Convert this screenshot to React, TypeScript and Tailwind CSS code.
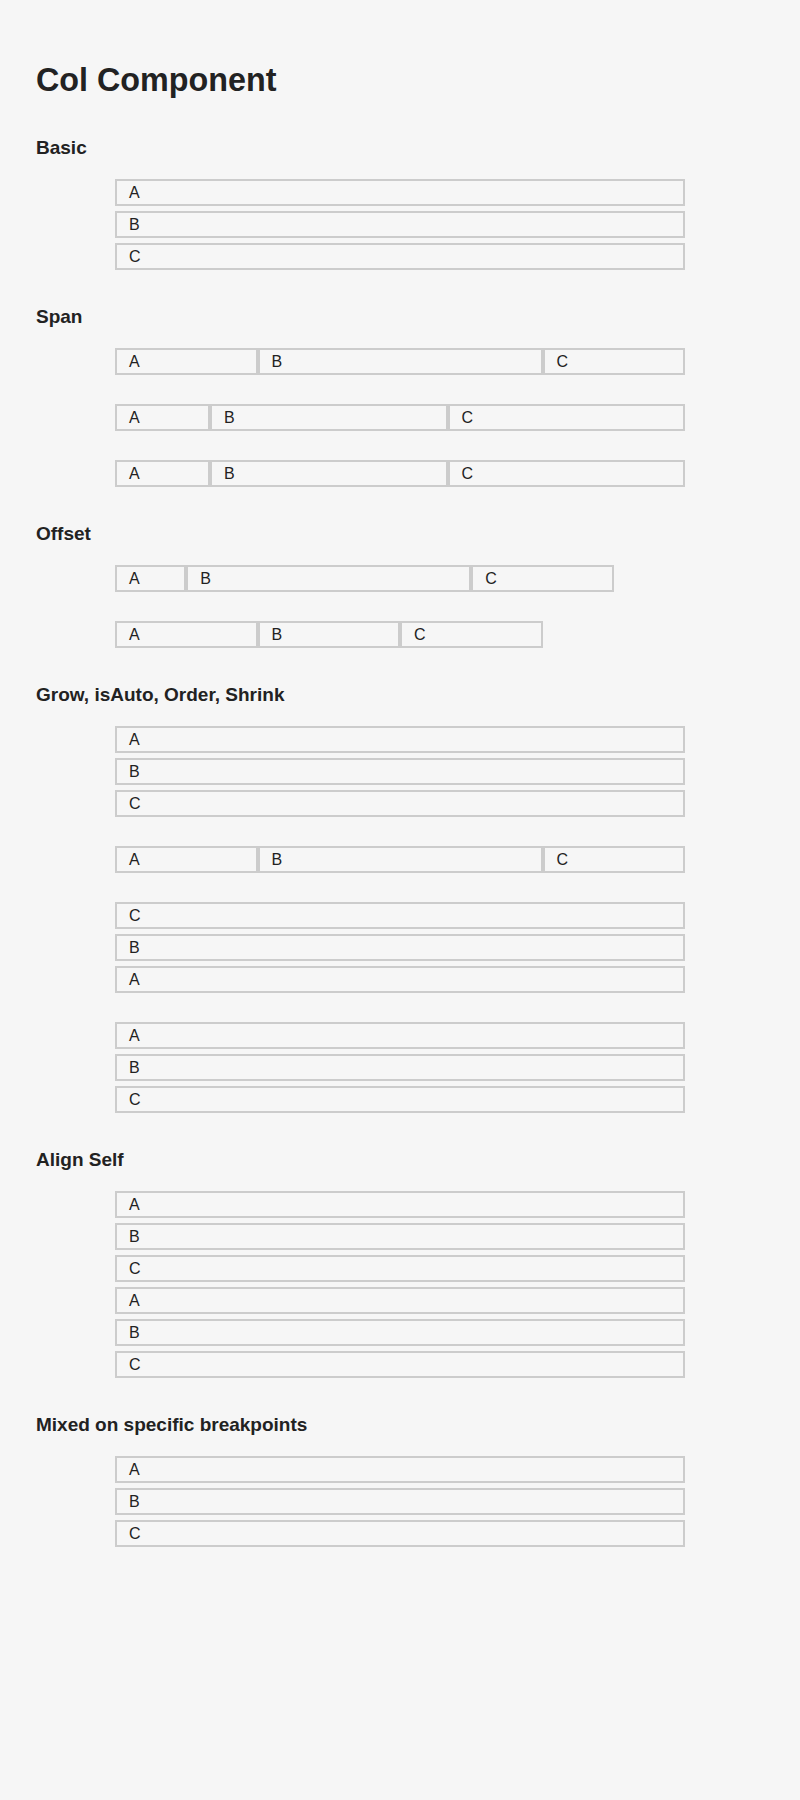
type Cell = { label: string; width: string };

type Group = Cell[][];

const full = (labels: string[]): Cell[][] =>
  labels.map((label) => [{ label, width: "w-full" }]);

const sections: { title: string; groups: Group[] }[] = [
  {
    title: "Basic",
    groups: [full(["A", "B", "C"])],
  },
  {
    title: "Span",
    groups: [
      [
        [
          { label: "A", width: "w-3/12" },
          { label: "B", width: "w-6/12" },
          { label: "C", width: "w-3/12" },
        ],
      ],
      [
        [
          { label: "A", width: "w-2/12" },
          { label: "B", width: "w-5/12" },
          { label: "C", width: "w-5/12" },
        ],
      ],
      [
        [
          { label: "A", width: "w-2/12" },
          { label: "B", width: "w-5/12" },
          { label: "C", width: "w-5/12" },
        ],
      ],
    ],
  },
  {
    title: "Offset",
    groups: [
      [
        [
          { label: "A", width: "w-[12.5%]" },
          { label: "B", width: "w-6/12" },
          { label: "C", width: "w-3/12" },
        ],
      ],
      [
        [
          { label: "A", width: "w-3/12" },
          { label: "B", width: "w-3/12" },
          { label: "C", width: "w-3/12" },
        ],
      ],
    ],
  },
  {
    title: "Grow, isAuto, Order, Shrink",
    groups: [
      full(["A", "B", "C"]),
      [
        [
          { label: "A", width: "w-3/12" },
          { label: "B", width: "w-6/12" },
          { label: "C", width: "w-3/12" },
        ],
      ],
      full(["C", "B", "A"]),
      full(["A", "B", "C"]),
    ],
  },
  {
    title: "Align Self",
    groups: [full(["A", "B", "C", "A", "B", "C"])],
  },
  {
    title: "Mixed on specific breakpoints",
    groups: [full(["A", "B", "C"])],
  },
];

function Box({ label, width }: Cell) {
  return (
    <div
      className={`${width} flex h-[27px] items-center border-2 border-[#cccccc] pl-3 text-base leading-[18px] text-[#222222]`}
    >
      {label}
    </div>
  );
}

export default function App() {
  return (
    <div
      className="min-h-[1800px] bg-[#f6f6f6] px-9 pt-[62px] text-[#222222]"
      style={{ fontFamily: '"Liberation Sans", Arial, sans-serif' }}
    >
      <h1 className="text-[32.3px] font-bold leading-[37px]">Col Component</h1>

      <div className="mt-[37px] flex flex-col gap-[35px]">
        {sections.map((section) => (
          <section key={section.title}>
            <h2 className="text-[19px] font-bold leading-[23px]">
              {section.title}
            </h2>
            <div className="mx-auto mt-5 flex w-[570px] flex-col gap-[29px]">
              {section.groups.map((group, gi) => (
                <div key={gi} className="flex flex-col gap-[5px]">
                  {group.map((row, ri) => (
                    <div key={ri} className="flex">
                      {row.map((cell, ci) => (
                        <Box key={ci} {...cell} />
                      ))}
                    </div>
                  ))}
                </div>
              ))}
            </div>
          </section>
        ))}
      </div>
    </div>
  );
}
